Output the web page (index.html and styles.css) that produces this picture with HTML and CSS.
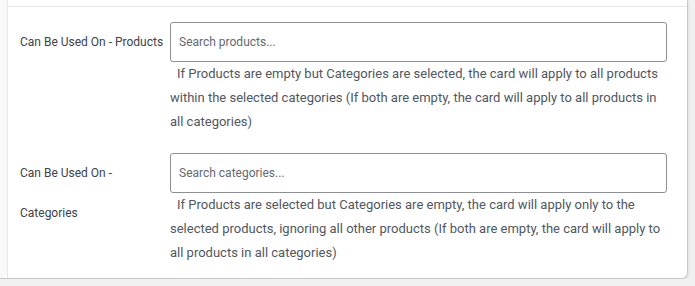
FILE: index.html
```html
<!DOCTYPE html>
<html lang="en">
  <head>
    <meta charset="UTF-8" />
    <meta name="viewport" content="width=device-width, initial-scale=1.0" />
    <title>Gift Card Restrictions</title>
    <link rel="stylesheet" href="styles.css">
  </head>
  <body>
    <div class="card">
      <div class="gutter"></div>
      <div class="content">
        <div class="divider"></div>
        <div class="fields">
          <div class="field">
            <label for="products">Can Be Used On - Products</label>
            <div class="control">
              <input type="text" id="products" placeholder="Search products..." />
              <p class="description">If Products are empty but Categories are selected, the card will apply to all products within the selected categories (If both are empty, the card will apply to all products in all categories)</p>
            </div>
          </div>
          <div class="field">
            <label for="categories">Can Be Used On - Categories</label>
            <div class="control">
              <input type="text" id="categories" placeholder="Search categories..." />
              <p class="description">If Products are selected but Categories are empty, the card will apply only to the selected products, ignoring all other products (If both are empty, the card will apply to all products in all categories)</p>
            </div>
          </div>
        </div>
      </div>
    </div>
  </body>
</html>
```
FILE: styles.css
```css
body {
  margin: 0;
  background-color: #f0f0f1;
  font-family: Roboto, Arial, sans-serif;
  color: #3c434a;
}

.card {
  display: flex;
  width: 687px;
  background-color: #fff;
  border-right: 1px solid #c9c9c9;
  border-bottom: 1px solid #c9c9c9;
  border-bottom-right-radius: 6px;
  box-shadow: 1px 1px 2px rgba(0, 0, 0, 0.06);
}

.gutter {
  width: 7px;
  background-color: #f9f9f9;
  border-right: 1px solid #e8e8e8;
}

.content {
  flex: 1;
  padding-top: 6px;
}

.divider {
  height: 1px;
  background-color: #e8e8e8;
}

.fields {
  padding: 15px 20px 13px 12px;
  display: flex;
  flex-direction: column;
  gap: 19px;
}

.field {
  display: grid;
  grid-template-columns: 150px 1fr;
}

.field label {
  font-size: 12px;
  line-height: 40px;
  padding-right: 6px;
}

.control input[type="text"] {
  display: block;
  width: 100%;
  height: 40px;
  box-sizing: border-box;
  margin: 0;
  padding: 0 8px;
  font-family: Roboto, Arial, sans-serif;
  font-size: 12px;
  color: #2c3338;
  border: 1px solid #8c8f94;
  border-radius: 3px;
  background-color: #fff;
}

.control input::placeholder {
  color: #646970;
}

.description {
  margin: 0;
  font-size: 13px;
  line-height: 24px;
  color: #50575e;
  text-indent: 7px;
}
```
